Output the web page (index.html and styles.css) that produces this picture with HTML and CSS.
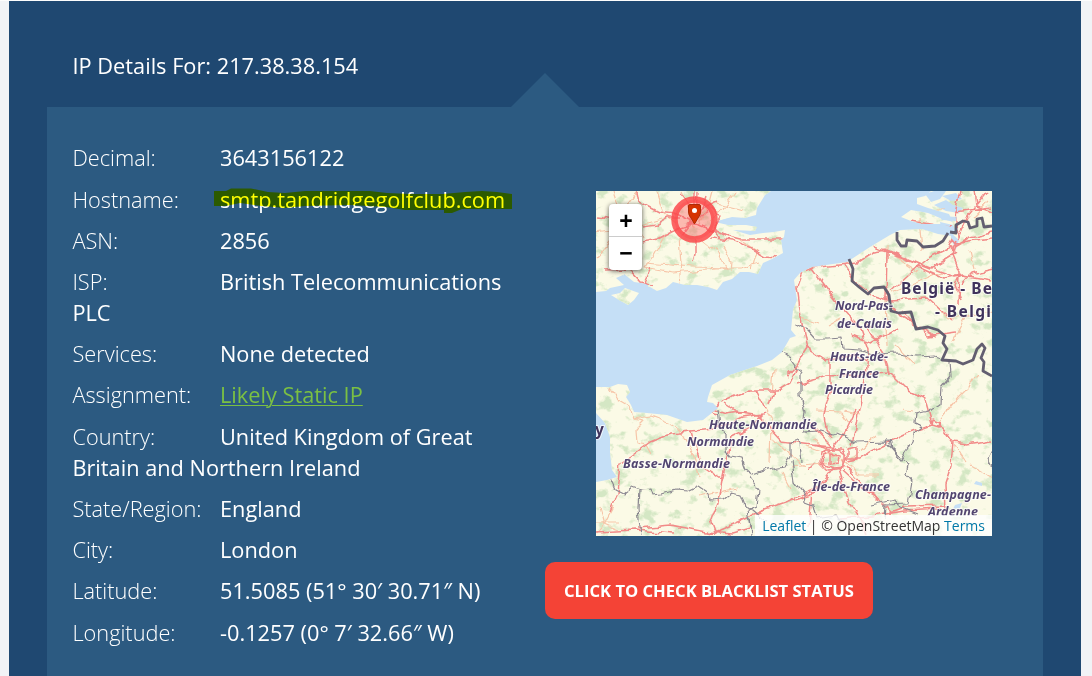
FILE: index.html
```html
<!DOCTYPE html>
<html lang="en">
<head>
<meta charset="utf-8">
<title>IP Details</title>
<link rel="stylesheet" href="styles.css">
</head>
<body>
<main class="section">
  <h1 class="title">IP Details For: 217.38.38.154</h1>
  <div class="panel">
    <div class="details">
      <p class="row"><span class="label">Decimal:</span>3643156122</p>
      <p class="row row-host"><span class="label">Hostname:</span><span class="host">smtp.tandridgegolfclub.com<svg class="marker-pen" width="300" height="26" viewBox="213 187 300 26"><path d="M214 191 L226 191 L231 188.5 L251 188.5 L268 192 L285 193 L305 191 L370 191 L387 193 L411 194 L443 194 L465 192 L482 191 L497 192 L512 194 V209 L462 209 L452 213 H444 V210 H405 L386 207 L350 205 L305 206 L285 208 L262 206 L240 203 L226 206 H214Z"/></svg></span></p>
      <p class="row"><span class="label">ASN:</span>2856</p>
      <p class="row"><span class="label">ISP:</span>British Telecommunications PLC</p>
      <p class="row"><span class="label">Services:</span>None detected</p>
      <p class="row"><span class="label">Assignment:</span><a class="static-link" href="#">Likely Static IP</a></p>
      <p class="row"><span class="label">Country:</span>United Kingdom of Great Britain and Northern Ireland</p>
      <p class="row"><span class="label">State/Region:</span>England</p>
      <p class="row"><span class="label">City:</span>London</p>
      <p class="row"><span class="label">Latitude:</span>51.5085 (51° 30′ 30.71″ N)</p>
      <p class="row"><span class="label">Longitude:</span>-0.1257 (0° 7′ 32.66″ W)</p>
    </div>
    <div class="side">
      <div class="map">
        <svg class="map-canvas" width="396" height="345" viewBox="596 191 396 345">
          <defs>
            <filter id="woods" x="0" y="0" width="1" height="1">
              <feTurbulence type="fractalNoise" baseFrequency="0.07 0.09" numOctaves="4" seed="8"/>
              <feColorMatrix values="0 0 0 0 .66  0 0 0 0 .8  0 0 0 0 .55  0 6 0 0 -3.25"/>
            </filter>
            <filter id="winding" filterUnits="userSpaceOnUse" x="596" y="191" width="396" height="345">
              <feTurbulence type="fractalNoise" baseFrequency="0.08" numOctaves="2" seed="3"/>
              <feDisplacementMap in="SourceGraphic" scale="8" xChannelSelector="R" yChannelSelector="G"/>
            </filter>
            <clipPath id="land">
              <path d="M596 191H771L765 195 757 208 756 215 745 218 732 217 718 221 730 222 757 227 755 231 733 230 750 235 763 233 774 232 785 230 784 237 781 240 783 253 772 259 763 263 758 274 749 272 740 272 732 279 723 282 717 290 708 287 697 285 685 285 673 282 666 288 657 291 650 287 640 285 632 282 623 275 616 278 624 285 610 288 606 291 596 292Z"/>
              <path d="M611 295L620 293 625 288 639 293 634 300 628 305 619 300Z"/>
              <path d="M596 387H610L618 384 627 385 630 392 626 397 631 405 634 412 647 413 667 415 687 422 703 420 718 408 713 403 707 402 708 397 712 385 730 375 757 366 772 360 782 352 790 338 796 336 791 330 793 310 797 300 794 280 800 273 812 267 847 262 870 247 890 235 900 230 922 229 938 234 952 236 958 229 942 224 922 224 911 221 901 217 911 210 928 213 940 218 953 222 949 214 928 208 917 204 917 198 925 196 931 191H992V536H596V482L607 480 617 477 612 470 610 452 610 437 605 423 596 413Z"/>
            </clipPath>
          </defs>
          <rect class="sea" x="596" y="191" width="396" height="345"/>
          <g clip-path="url(#land)">
            <rect class="ground" x="596" y="191" width="396" height="345"/>
            <rect filter="url(#woods)" x="596" y="191" width="396" height="345"/>
          </g>
          <g class="water">
            <path d="M715 222l14-4 28 4-9 3-20 0zM624 274l10 8 14 2v4l-12-1-13-8zM925 194l9-3h12l-6 8-9 3zM934 205l12-5 7 5 10 3-4 5-13-2zM939 216l18 1-1 4-14-1zM940 222l13 3 4 9-15-2zM951 233l8 7-3 9-5-9zM942 196l14-3 6 6-11 2z"/>
            <path d="M976 481l6 2 0 3-8-2zM955 505l7-2-2 5-7 1z"/>
          </g>
          <g clip-path="url(#land)">
          <g filter="url(#winding)">
          <g class="minor">
            <path d="M613 191l5 14 16 10 9 23M656 191l8 22 12 10M681 191l8 16 3 21M712 191l-5 19-9 16M735 191l-10 14-16 18M680 238l2 25-2 22M666 233l-12 22-10 13 29 5 43-4 25 0 18-6M723 245l9 17-1 10M703 240l15 12 8 18M646 263l48 4 32 1M596 233l34-5 31-9M596 257l13-15 29-3M608 244l7 16 23 19M740 240l17 10-5 20M716 203l27 7M625 207l13-16"/>
            <path d="M610 388l8 12 12 7 4 12 11 2-9 9 1 13 9 2 5 9M634 419l17-3 18 7 12 9M681 432l12 22 6 22M774 369l-2 28M765 410l7 11-1 44M700 497l24-6 14-3M596 522l23 0M605 524l-8 10M605 524l-5-18M605 524l12 5M605 524l9-17M773 440l33 28M782 472l9 17M817 411l25 1 7 10M845 411l16 4M903 409l10 2M841 460l-28-20M842 460l17 15 19 0M836 462l-46 4M835 457l-28-10M851 460l25-24M938 422l21-26 20-20M954 446l13 18M970 466l22 12M887 245v16M877 248l17 7 24 16M920 218l3 32M849 263l-13-1M802 318l19 6M885 300l2 46M896 345l20 20M842 318l-14 8M936 305l12 15 44-8M953 341l12-24M969 250l5 20M893 293l48-20M988 201l-15 16M945 210l-17 0"/>
          </g>
          <g class="major">
            <path d="M638 191l2 11 19 10 18 2M596 216l18 3M643 227l13-2 12-7 11 0M640 242l18-3 20-11M606 270l22-1 11 12 5 1M654 285l-10-4 6-13M695 241v14l-2 8M715 229l13 7 12 3 43 0M711 238l21 2 18 7 16 9 10 1M712 208l10 10-8 11 6 10M694 191v22l-4 6M680 193l12 15M706 196l-6 18M671 230l20-6 17-12M681 236l19-26 18-9M674 213l21 11 22 8M697 191l-1 28"/>
            <path d="M795 292l7-20 10-4 45-5 17-11 13-2 35 15 33 12 9-2M812 269l17 23 14 18 17 19 7 20-2 32-9 43-4 21M797 285l5 40 5 24-11 17-9 10M872 246l18 7 22 9 18 7 26-16M887 252l-1 47M885 297l36-33M844 265l11 17 19 14 13 4M886 285l4 14-8 0M889 302l13 16 18 10 16 8M890 300l37-2 26 23M900 312l28 24 27-4M911 221l25 4 16 2M955 239l-3 17 7 17-1 32M955 245l-25 12-12 10 24 11 21-3 29 5M955 244l37-5M955 247l16-9 21-5M960 191l-4 17 2 28M975 191l2 15 15 6M955 212l37-5M988 191l-21 26-10 22M992 269l-21 5-9 10M872 325l-7-2 10 17 10 15 4 20M897 328l-27 15-18-7M807 348l20 13 30-7 8 7M797 385l30-9 30-1 32-3 18 18 18 9 7 25M831 361l0 28-7 25 2 14 6 10M692 432l22-2 28-13 22-3M692 432l-22 2-20 8-29 22-3 30-8 18M692 432l8 32 22 15-2 17-9 24 5 14M720 402l28-12 29 0 13-8 7-14M755 390l10 20M774 390l-4 14M723 403l12 8 25 4 9 13 12 13 31 4 18 4M715 410l12 4 20-3M765 413l-12 13-20 10-11 45M718 403l-6 10 6 2M638 528l33-3 41 8 30-13 20-9 30-10 30-14M596 532l38-2 41 3M707 531l25 2 21-6M812 445l22 2 10 8 0 12-11 1-11-5 1-8 11-6M834 450l12-20 9-19M844 459l16 0 11-8 36-17 25-9 10 3 10 14 16 2 24-4M953 442l-2 24-6 18 1 27M833 467l-13 19-24 10-5 4M838 469l11 33 12 17 5 17M842 470l25 23 16 9 9 9M846 467l16 18 17 17M816 463l-8 8M832 446l-22-23M848 457v-8l9-2 0 13-10 2M812 490l-3 37M840 519l40-4 24-4 37-2M888 513l17-6 41-1M820 492l-31 10"/>
            <path d="M826 450l16 0 5 9-5 9-14 2-8-8 1-9zM830 454l10 2-1 7-9 1zM933 420l7 3-1 5-7-2zM951 239l5 6-2 7-6-7zM960 275l-5 10 6 15"/>
          </g>
          <g class="border-thin">
            <path d="M782 352l8 6 11 15 0 23 4 15-2 20 16-1 13 4 5-1 19 9 34-1 2 8 16 14-2 12 6 7-4 22-22 1-1 16M886 439l1 5 14 16 12-18 1-8 7-6-6-6 1-8 16-4 8-5 1-18 9-11-1-14M794 323l13 7 8 9 12 0 16-1 1 11 17 1 10 4 27-1 20 3 17-1 13 4M718 409l2 18 6 7 0 18 5 5 11 2 4 11 7 5 14-5 16-3 7-11 0-14 7-2 3 4 2 18M750 476l9 13-2 17-9 4 2 10 2 13M610 479l5 11 8 4 9-7 8 3 12-1 2 6 8-1 14-4 12 1 10-5 12 8 1 6 12-1 9-7 8 2 4 11 8 5 9 8 6 3"/>
            <path d="M639 490l-1 18 3 28M750 518l2 18M792 460l3 22 9 11 1 9 8 3 3 13 19-3 9 9M872 505l22-5 6 7 18 7M596 379l3 5M992 451l-4 8 4 8"/>
          </g>
          </g>
          </g>
          <g class="border">
            <path d="M897 232v8l4 6 5 0 1-6 10 1 6 6 12-1 8-5 5-8M950 232l6 1 0-8 7-4 5 1 2 6 7-2 0-7 5-1 2 9 8-1"/>
            <path d="M849 259L853 269 852 281 859 287 868 294 874 288 884 287 889 295 891 311 899 313 911 312 916 329 928 327 938 330 945 336 943 343 947 349 942 360 956 361 963 364 973 360 977 349 982 344 985 348 981 358 984 362 983 371 992 376"/>
          </g>
          <g class="map-label">
            <text x="835" y="310" textLength="58">Nord-Pas-</text>
            <text x="837" y="327.500" textLength="55">de-Calais</text>
            <text x="830" y="361" textLength="58">Hauts-de-</text>
            <text x="839" y="378" textLength="40">France</text>
            <text x="825" y="393.500" textLength="48">Picardie</text>
            <text x="709" y="429" textLength="108">Haute-Normandie</text>
            <text x="687" y="446" textLength="67">Normandie</text>
            <text x="623" y="468" textLength="107">Basse-Normandie</text>
            <text x="812" y="491" textLength="78">Île-de-France</text>
            <text x="915" y="499" textLength="76">Champagne-</text>
            <text x="928" y="515.500" textLength="50">Ardenne</text>
          </g>
          <g class="country-label">
            <text x="901" y="293.500" textLength="91">België - Be</text>
            <text x="935" y="317" textLength="56">- Belgi</text>
            <text x="595" y="435">y</text>
          </g>
          <circle class="accuracy" cx="694.500" cy="219.500" r="20"/>
          <path class="pin" d="M690 204.500h9q1.500 0 1.500 1.500v6q0 3-2.500 6l-3.500 6-3.500-6q-2.500-3-2.500-6v-6q0-1.500 1.500-1.500z"/>
          <circle class="pin-eye" cx="694.500" cy="210.500" r="2.500"/>
        </svg>
        <div class="zoom"><span class="zoom-btn">+</span><span class="zoom-btn">−</span></div>
        <div class="credit"><a href="#">Leaflet</a> | © OpenStreetMap <a href="#">Terms</a></div>
      </div>
      <a class="cta" href="#">CLICK TO CHECK BLACKLIST STATUS</a>
    </div>
  </div>
</main>
</body>
</html>
```
FILE: styles.css
```css
* { box-sizing: border-box; }
html { background: #f1f3f6; overflow: hidden; }
body {
  margin: 0;
  height: 676px;
  overflow: hidden;
  border-top: 1px solid #fdfdfd;
  padding: 0 11px 0 9px;
  font-family: "Open Sans", sans-serif;
  color: #fff;
}
.section { height: 675px; padding: 0 38px; background: #1f4871; display: flex; flex-direction: column; }
.title { margin: 0; padding: 50px 0 26px 25.5px; font-size: 21.75px; line-height: 30px; font-weight: 400; }
.panel { flex: 1; display: flex; background: #2c5a81; padding: 36px 25px 0; position: relative; }
.panel::before {
  content: "";
  position: absolute;
  left: 464px;
  top: -34px;
  border: solid transparent;
  border-width: 0 34px 34px;
  border-bottom-color: #2c5a81;
}
.details { width: 473px; padding: .2px 18px 0 .4px; font-size: 21.75px; line-height: 30.8px; }
.row { margin: 0 0 10.5px; }
.row-host { margin-top: 11.3px; margin-bottom: 9.7px; }
.label { display: inline-block; width: 147.6px; font-weight: 300; }
.host { position: relative; }
.marker-pen { position: absolute; left: -7px; top: 2px; fill: #ff0; mix-blend-mode: multiply; }
.static-link { color: #7bc043; text-decoration-thickness: 1px; text-underline-offset: 2px; }
.side { padding-top: 48px; }
.map { position: relative; width: 396px; height: 345px; margin-left: 51px; overflow: hidden; }
.map-canvas { display: block; }
.sea, .water { fill: #c5dff6; }
.ground { fill: #fbfae6; }
.minor, .major, .border, .border-thin { fill: none; stroke-linejoin: round; }
.minor { stroke: #f7c5a8; stroke-width: 1.2; }
.major { stroke: #f28a88; stroke-width: 1.5; }
.border { stroke: #625e70; stroke-width: 2.8; }
.border-thin { stroke: #8c8891; stroke-width: 1.2; }
.map-label, .country-label { font-family: "Noto Sans", sans-serif; font-weight: 700; fill: #524570; stroke: rgba(255, 255, 255, .7); stroke-width: 2; paint-order: stroke; }
.map-label { font-size: 12.5px; font-style: italic; }
.country-label { font-size: 15.5px; fill: #40335c; }
.accuracy { fill: rgba(255, 80, 90, .38); stroke: #fc4a4c; stroke-opacity: .85; stroke-width: 6.5; }
.pin { fill: #d63301; stroke: #ad2b08; stroke-width: 1; }
.pin-eye { fill: #fff; }
.zoom { position: absolute; left: 13px; top: 13px; width: 33px; border-radius: 4px; background: #fff; box-shadow: 0 1px 5px rgba(0, 0, 0, .65); }
.zoom-btn { display: block; height: 33px; padding-left: 1px; font: 700 23px/32px "Liberation Sans", sans-serif; text-align: center; color: #000; }
.zoom-btn:first-child { border-bottom: 1px solid #ccc; line-height: 34px; }
.credit { position: absolute; right: 0; bottom: 0; height: 21px; padding: 0 7px; background: rgba(255, 255, 255, .8); color: #333; font-size: 14px; line-height: 21px; white-space: nowrap; }
.credit a { color: #0078a8; text-decoration: none; }
.cta { display: block; width: 328px; height: 57px; margin-top: 26px; border-radius: 10px; background: #f44336; color: #fff; font-size: 16.6px; font-weight: 700; line-height: 58px; text-align: center; text-decoration: none; white-space: nowrap; }
```
